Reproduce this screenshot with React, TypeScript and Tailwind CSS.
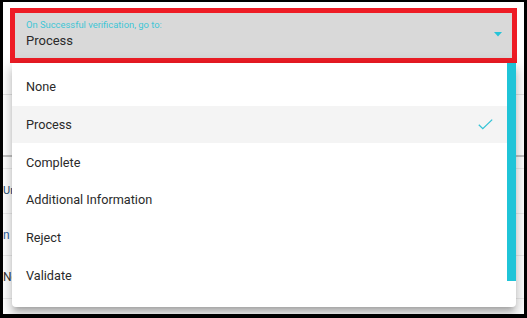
import React from "react";

const items = ["None", "Process", "Complete", "Additional Information", "Reject", "Validate"];

export default function App() {
  return (
    <div
      className="w-[527px] h-[318px] bg-black pt-[2px] pl-[3px] pr-[3px] pb-[4px]"
      style={{ fontFamily: "Roboto, 'Liberation Sans', sans-serif" }}
    >
      <div className="relative w-full h-full bg-white overflow-hidden">
        {/* page beneath */}
        <div className="pt-[6px] px-[7px]">
          <div className="relative h-[55px] border-[5px] border-[#ee1c25] bg-[#d9d9d9] pl-[11px]">
            <div className="pt-[6px] text-[9.4px] leading-[11px] text-[#3ec6d6] whitespace-nowrap">On Successful verification, go to:</div>
            <div className="pt-[3px] text-[13px] leading-[16px] text-[#2a2a2a]">Process</div>
            <svg className="absolute right-[10px] top-[19px]" width="8" height="5" viewBox="0 0 8 5">
              <path d="M0 0 L8 0 L4 4.5 Z" fill="#26c4d8" />
            </svg>
          </div>
        </div>
        <div className="h-[31px]" />
        <div className="h-px bg-[#e4e4e4]" />
        <div className="h-[60px]" />
        <div className="h-[2px] bg-[#c4c4c4]" />
        <div className="h-[11px]" />
        <div className="h-px bg-[#ececec]" />
        <div className="h-[44px] flex items-center text-[11px] text-[#244a6e] whitespace-nowrap">Ur</div>
        <div className="h-px bg-[#ececec]" />
        <div className="h-[41px] flex items-center text-[12px] text-[#2f62a0] whitespace-nowrap">n</div>
        <div className="h-px bg-[#ececec]" />
        <div className="h-[42px] flex items-center text-[12px] text-[#333] whitespace-nowrap">Ne</div>
        <div className="h-px bg-[#ececec]" />

        {/* dropdown menu overlay */}
        <div className="absolute left-[9px] top-[61px] w-[504px] h-[244px] bg-white rounded-b-[4px] flex shadow-[0px_5px_5px_-3px_rgba(0,0,0,0.2),0px_8px_10px_1px_rgba(0,0,0,0.14),0px_3px_14px_2px_rgba(0,0,0,0.12)]">
          <div className="flex-1 pt-[5px]">
            {items.map((it) => (
              <div
                key={it}
                className={
                  "h-[37.7px] flex items-center justify-between pl-[14px] pr-[14px] text-[12.7px] text-[#2a2a2a] " +
                  (it === "Process" ? "bg-[#f4f4f4]" : "")
                }
              >
                <span>{it}</span>
                {it === "Process" && (
                  <svg width="15" height="11" viewBox="0 0 15 11">
                    <path d="M0.8 5.8 L4.8 9.6 L14.2 0.6" fill="none" stroke="#33c3d6" strokeWidth="1.3" />
                  </svg>
                )}
              </div>
            ))}
          </div>
          <div className="w-[9px]">
            <div className="h-[218px] bg-[#1fc4d8]" />
          </div>
        </div>
      </div>
    </div>
  );
}
